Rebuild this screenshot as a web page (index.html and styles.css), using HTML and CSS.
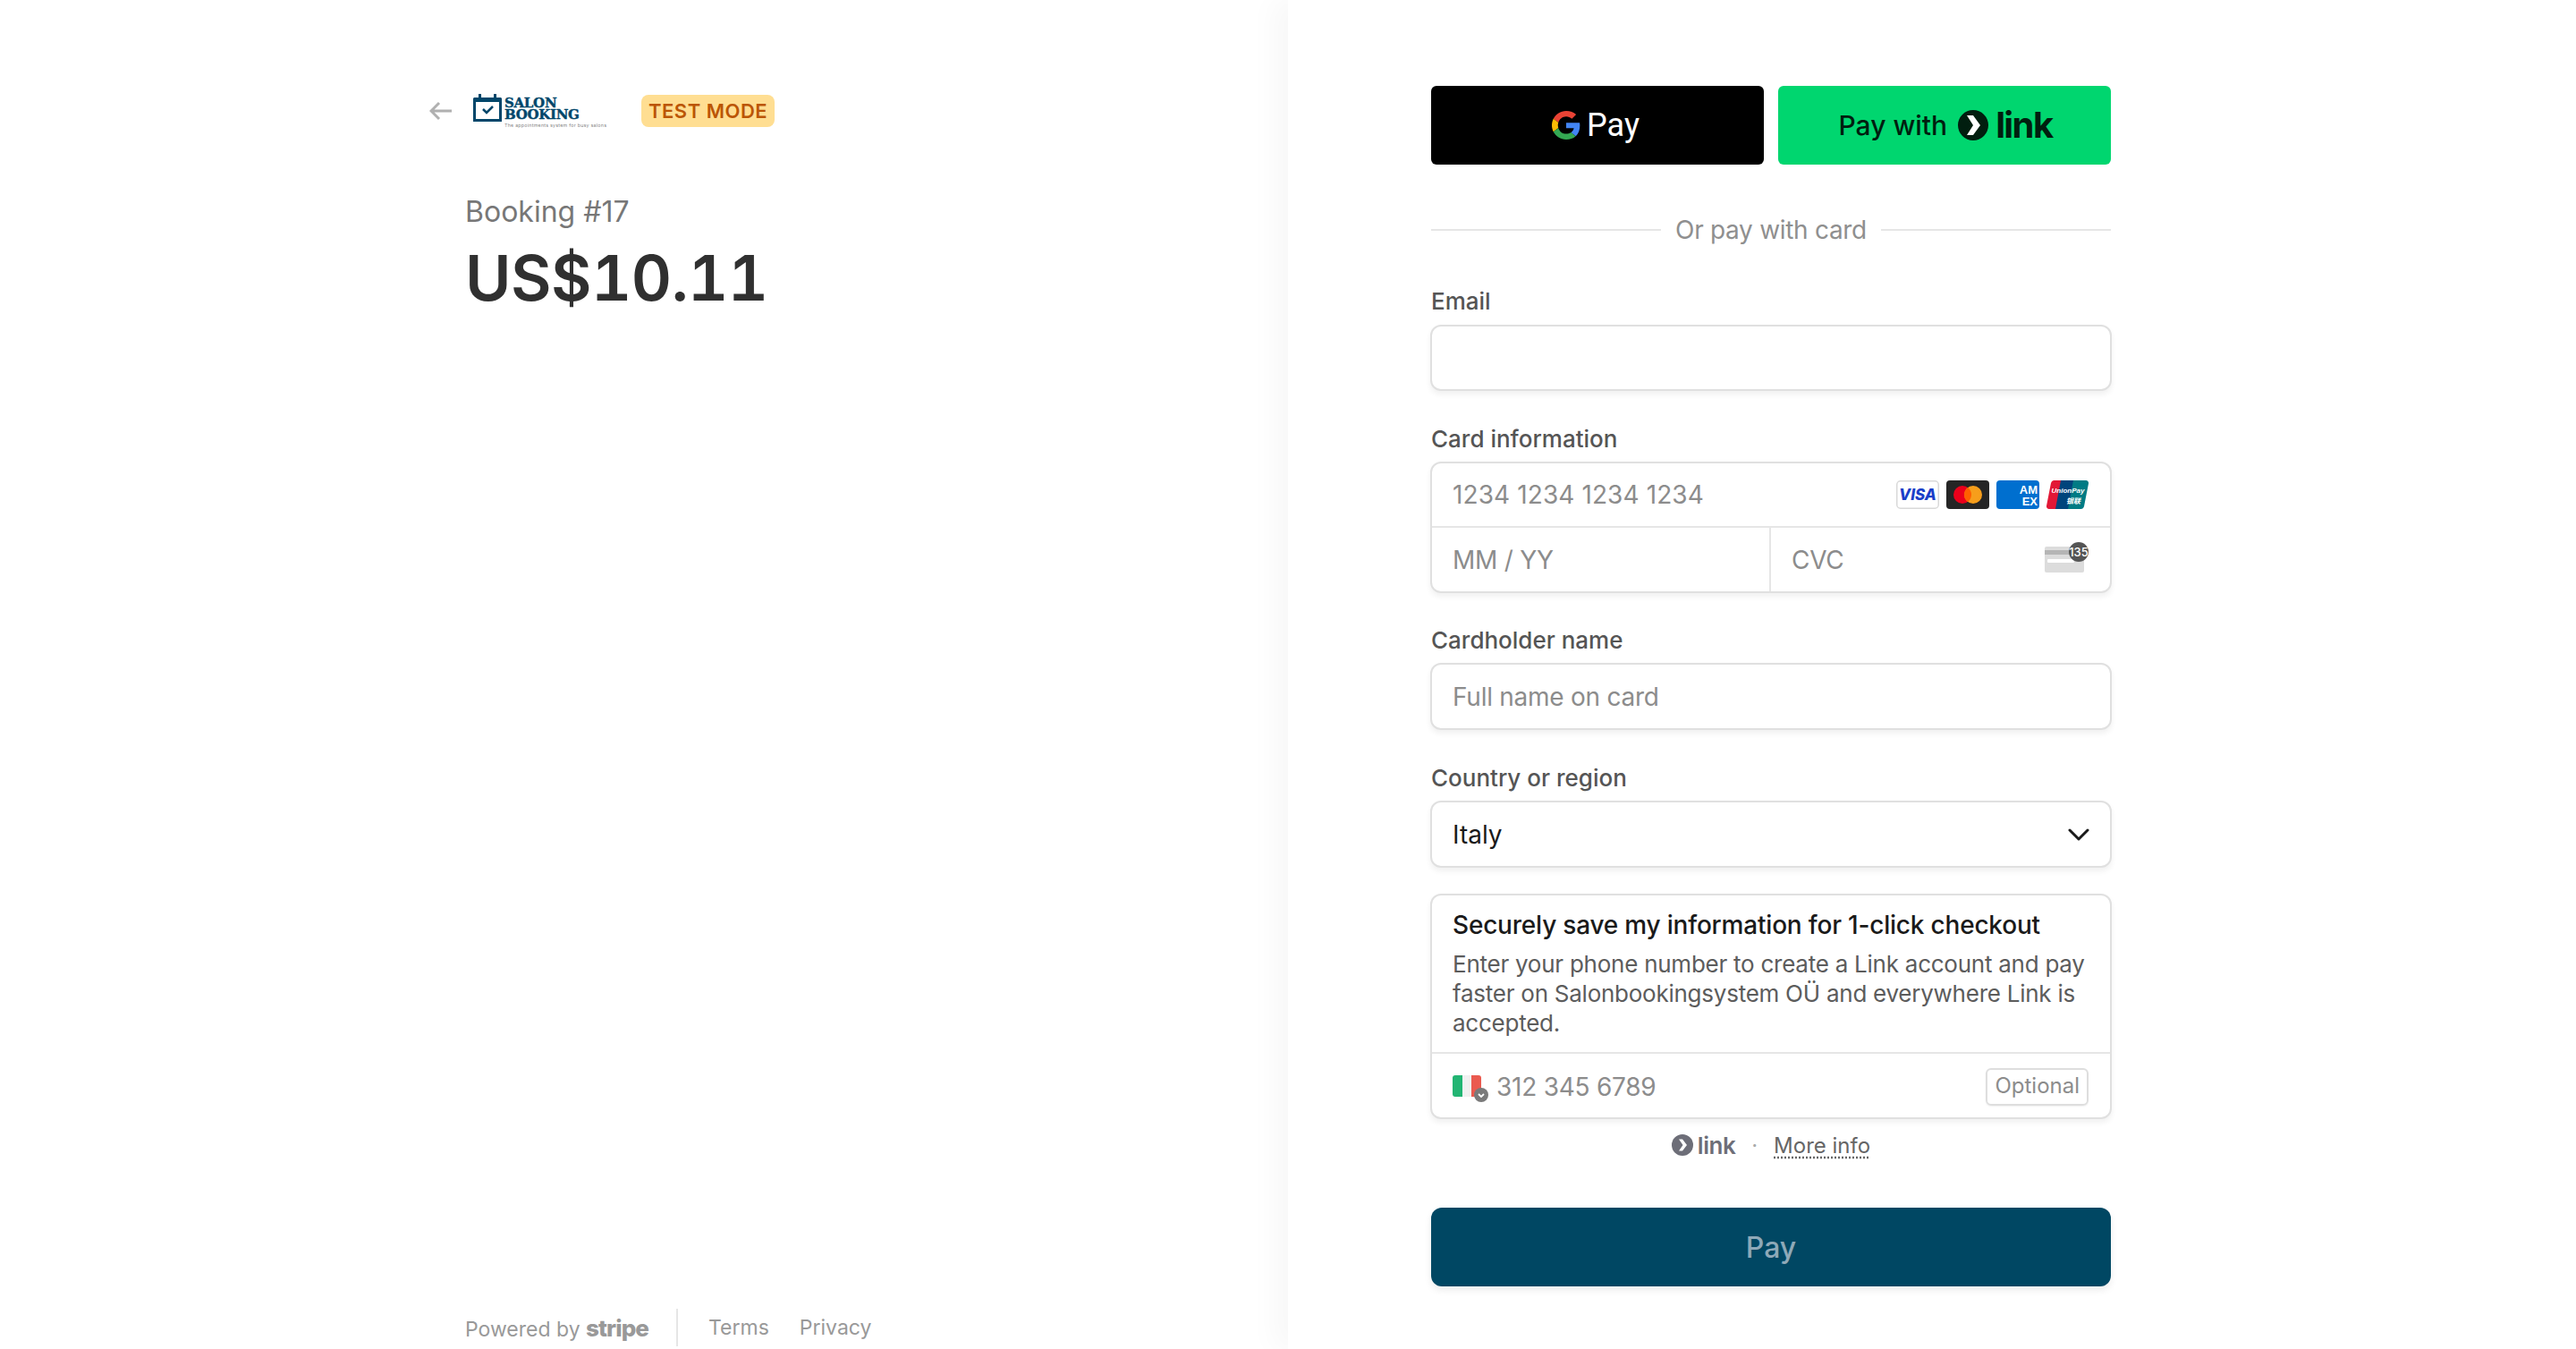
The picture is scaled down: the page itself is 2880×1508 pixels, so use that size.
FILE: index.html
```html
<!DOCTYPE html>
<html lang="en">
<head>
<meta charset="utf-8">
<title>Booking #17</title>
<link rel="stylesheet" href="styles.css">
</head>
<body>
<main class="page">
  <section class="summary">
    <div class="summary-top">
      <header class="brand-row">
        <svg class="back" viewBox="0 0 26 22" width="26" height="22"><path d="M25 11H3M11 2 2 11l9 9" fill="none" stroke="#b0b0b0" stroke-width="3"/></svg>
        <div class="logo">
          <svg class="logo-icon" viewBox="0 0 32 31" width="32" height="31"><path d="M1.500 6H30.500V29.500H1.500Z" fill="none" stroke="#00466a" stroke-width="3"/><path d="M1 4h30v5H1z" fill="#00466a"/><path d="M6 0h3v5H6zM23 0h3v5h-3z" fill="#00466a"/><path d="M11 17l4 4 7-7" fill="none" stroke="#00466a" stroke-width="2.500"/></svg>
          <div class="logo-words">
            <span class="logo-name">SALON<br>BOOKING</span>
            <span class="logo-tag">The appointments system for busy salons</span>
          </div>
        </div>
        <span class="test-badge">TEST MODE</span>
      </header>
      <p class="product">Booking #17</p>
      <p class="amount">US$10.11</p>
    </div>
    <footer class="legal">
      <span class="powered">Powered by <b class="stripe">stripe</b></span>
      <span class="legal-sep"></span>
      <a class="legal-link">Terms</a>
      <a class="legal-link">Privacy</a>
    </footer>
  </section>

  <section class="checkout">
    <div class="wallets">
      <button class="wallet gpay">
        <svg viewBox="0 0 48 48" width="32" height="32"><path fill="#ea4335" d="M24 9.500c3.700 0 7 1.300 9.600 3.700l7.100-7.100C36.400 2.200 30.700 0 24 0 14.600 0 6.500 5.400 2.600 13.200l8.300 6.400C12.800 13.700 17.900 9.500 24 9.500z"/><path fill="#4285f4" d="M47 24.500c0-1.600-.2-3.100-.4-4.500H24v9h12.900c-.6 3-2.200 5.500-4.700 7.200l8 6.200C44.900 38.100 47 31.900 47 24.500z"/><path fill="#fbbc05" d="M10.900 28.600c-.5-1.400-.8-3-.8-4.600s.3-3.200.8-4.600l-8.300-6.400C.9 16.500 0 20.100 0 24s.9 7.500 2.600 11z"/><path fill="#34a853" d="M24 48c6.500 0 11.900-2.100 15.900-5.800l-8-6.200c-2.200 1.500-5 2.400-7.900 2.400-6.100 0-11.200-4.100-13.100-9.700l-8.300 6.300C6.500 42.600 14.600 48 24 48z"/></svg>
        <span class="gpay-text">Pay</span>
      </button>
      <button class="wallet linkpay">
        <span class="linkpay-text">Pay with</span>
        <svg viewBox="0 0 34 34" width="34" height="34"><circle cx="17" cy="17" r="17" fill="#011e0f"/><path d="M10 6h7l8 11-8 11h-7l7-11z" fill="#fff"/></svg>
        <span class="link-word">link</span>
      </button>
    </div>

    <div class="divider"><span>Or pay with card</span></div>

    <div class="field field-email">
      <span class="label">Email</span>
      <div class="box input"></div>
    </div>

    <div class="field">
      <span class="label">Card information</span>
      <div class="box card">
        <div class="card-row">
          <span class="ph ph-num">1234 1234 1234 1234</span>
          <div class="brands">
            <svg viewBox="0 0 48 32" width="48" height="32"><rect x=".75" y=".75" width="46.500" height="30.500" rx="4" fill="#fff" stroke="#d9d9d9" stroke-width="1.500"/><text x="24" y="22" class="visa-mark">VISA</text></svg>
            <svg viewBox="0 0 48 32" width="48" height="32"><rect width="48" height="32" rx="4" fill="#252525"/><circle cx="18" cy="16" r="10" fill="#eb001b"/><circle cx="30" cy="16" r="10" fill="#f79e1b"/><path d="M24 8a10 10 0 0 1 0 16 10 10 0 0 1 0-16z" fill="#ff5f00"/></svg>
            <svg viewBox="0 0 48 32" width="48" height="32"><rect width="48" height="32" rx="4" fill="#006fcf"/><text x="46" y="15" class="amex-mark">AM</text><text x="46" y="28" class="amex-mark">EX</text></svg>
            <svg viewBox="0 0 47 32" width="47" height="32"><path d="M8 0h14L16 32H3a3 3 0 0 1-3-3.500L5 3a4 4 0 0 1 3-3z" fill="#e21836"/><path d="M16 0h16l-6 32H10z" fill="#00447c"/><path d="M30 0h14a3 3 0 0 1 3 3.500L42 29a4 4 0 0 1-4 3H24z" fill="#007b84"/><text x="24" y="14" class="up-mark">UnionPay</text><text x="30" y="26" class="up-mark">银联</text></svg>
          </div>
        </div>
        <div class="card-row card-split">
          <div class="card-cell"><span class="ph">MM / YY</span></div>
          <div class="card-cell cvc"><span class="ph">CVC</span>
            <svg viewBox="0 0 56 36" width="56" height="36" class="cvc-icon"><rect x="2" y="6" width="44" height="29" rx="2" fill="#dcdcdc"/><rect x="2" y="10" width="44" height="5" fill="#b5b5b5"/><rect x="5" y="20" width="30" height="4" rx="1" fill="#fff"/><circle cx="40" cy="12" r="11" fill="#555"/><text x="40" y="16.500" class="cvc-num">135</text></svg>
          </div>
        </div>
      </div>
    </div>

    <div class="field">
      <span class="label">Cardholder name</span>
      <div class="box input"><span class="ph">Full name on card</span></div>
    </div>

    <div class="field">
      <span class="label">Country or region</span>
      <div class="box input select">
        <span class="value">Italy</span>
        <svg viewBox="0 0 24 14" width="24" height="14"><path d="M2 2l10 10L22 2" fill="none" stroke="#1a1a1a" stroke-width="3" stroke-linecap="round" stroke-linejoin="round"/></svg>
      </div>
    </div>

    <div class="box linkbox">
      <div class="linkbox-body">
        <p class="linkbox-title">Securely save my information for 1-click checkout</p>
        <p class="linkbox-text">Enter your phone number to create a Link account and pay faster on Salonbookingsystem OÜ and everywhere Link is accepted.</p>
      </div>
      <div class="phone-row">
        <span class="flag">
          <svg viewBox="0 0 42 34" width="42" height="34"><path d="M3 0h8v24H3a3 3 0 0 1-3-3V3a3 3 0 0 1 3-3z" fill="#22b573"/><rect x="11" width="10" height="24" fill="#f1f1f1"/><path d="M21 0h8a3 3 0 0 1 3 3v18a3 3 0 0 1-3 3h-8z" fill="#ea5a4f"/><circle cx="32" cy="22" r="8" fill="#7a7a7a"/><path d="M29 21l3 3 3-3" fill="none" stroke="#fff" stroke-width="1.800"/></svg>
        </span>
        <span class="ph phone">312 345 6789</span>
        <span class="optional">Optional</span>
      </div>
    </div>

    <div class="link-foot">
      <svg viewBox="0 0 24 24" width="24" height="24"><circle cx="12" cy="12" r="12" fill="#6d6e78"/><path d="M8 5.500h4l5 6.500-5 6.500H8l4.500-6.500z" fill="#fff"/></svg>
      <span class="link-foot-word">link</span>
      <span class="link-dot">·</span>
      <a class="more">More info</a>
    </div>

    <button class="pay">Pay</button>
  </section>
</main>
</body>
</html>
```
FILE: styles.css
```css
* { box-sizing: border-box; }
html, body { margin: 0; height: 100%; background: #fff; }
body { font-family: Inter, "Noto Sans", "Liberation Sans", sans-serif; color: #1a1a1a; overflow: hidden; }
p { margin: 0; }
.page { display: flex; height: 1508px; width: 2880px; }

.summary { width: 1440px; padding: 104px 0 0 480px; display: flex; flex-direction: column; justify-content: space-between; }
.brand-row { display: flex; align-items: center; height: 40px; }
.back { margin-right: 23px; }
.logo { display: flex; align-items: flex-start; width: 188px; height: 40px; }
.logo-icon { margin-right: 3px; margin-top: 1px; }
.logo-words { display: flex; flex-direction: column; }
.logo-name { font: 800 15px/13px "DejaVu Serif", serif; color: #00466a; margin-top: 5px; letter-spacing: -.3px; -webkit-text-stroke: .4px #00466a; }
.logo-tag { font: 400 5.300px/7px Inter, sans-serif; color: #888; margin-top: 2px; white-space: nowrap; letter-spacing: .25px; }
.test-badge { background: #ffde92; color: #bb5504; font-size: 22px; font-weight: 600; line-height: 36px; padding: 0 8px; border-radius: 8px; letter-spacing: .5px; }
.product { margin: 69px 0 0 40px; font-size: 32px; line-height: 48px; font-weight: 400; color: #777; }
.amount { margin: 10px 0 0 40px; font-size: 70px; line-height: 80px; font-weight: 600; color: #303030; font-variant-numeric: tabular-nums; letter-spacing: -.5px; }
.legal { margin-left: 40px; height: 48px; display: flex; align-items: center; font-size: 23px; color: #999; margin-bottom: 0; }
.stripe { font-weight: 800; letter-spacing: -.9px; font-size: 26px; }
.legal-sep { width: 2px; height: 42px; background: #e6e6e6; margin: 0 34px 0 31px; }
.legal-link { margin-right: 34px; }

.checkout { width: 1440px; padding: 96px 0 0 160px; box-shadow: -16px 0 30px rgba(0, 0, 0, .03); background: #fff; }
.wallets { width: 760px; display: flex; gap: 16px; }
.wallet { flex: 0 0 372px; height: 88px; border: 0; border-radius: 6px; display: flex; align-items: center; justify-content: center; font-family: inherit; }
.gpay { background: #000; gap: 7px; padding-left: 2px; }
.gpay-text { color: #fff; font: 400 36px/40px Roboto, sans-serif; }
.linkpay { background: #00d66f; color: #011e0f; padding-left: 8px; }
.linkpay-text { font-size: 30px; font-weight: 500; margin-right: 12px; }
.link-word { font-size: 40px; font-weight: 700; margin-left: 8px; letter-spacing: -1.600px; line-height: 48px; }
.divider { width: 760px; margin-top: 53px; display: flex; align-items: center; gap: 16px; color: #8f8f8f; font-size: 28px; letter-spacing: -.3px; line-height: 40px; height: 40px; }
.divider::before, .divider::after { content: ""; flex: 1; height: 2px; background: #e6e6e6; }

.field { width: 760px; margin-top: 36px; }
.field-email { margin-top: 42px; }
.label { display: block; font-size: 26px; font-weight: 500; line-height: 36px; color: #555; margin-bottom: 7px; }
.field-email .label { margin-bottom: 8px; }
.box { background: #fff; border: 2px solid #e0e0e0; border-radius: 12px; box-shadow: 0 4px 6px rgba(0, 0, 0, .06); width: 762px; margin-left: -1px; }
.input { height: 75px; display: flex; align-items: center; padding: 0 23px; }
.field-email .input { height: 74px; }
.ph { color: #8c8c8c; font-size: 28px; letter-spacing: -.25px; }
.ph-num { letter-spacing: .1px; }
.value { font-size: 28px; color: #1a1a1a; }
.select { justify-content: space-between; padding-right: 23px; }
.card { height: 147px; margin-bottom: -1px; }
.card-row { height: 70px; display: flex; align-items: center; justify-content: space-between; padding: 0 24px 0 23px; }
.brands { display: flex; gap: 8px; }
.card-split { border-top: 2px solid #e6e6e6; padding: 0; height: 73px; align-items: stretch; }
.card-cell { flex: 1; display: flex; align-items: center; justify-content: space-between; padding: 0 23px; }
.card-cell:first-child { flex: 0 0 377px; }
.cvc { border-left: 2px solid #e6e6e6; padding-right: 19px; padding-left: 23px; }
.cvc-icon { margin-top: -6px; }
.visa-mark { font: italic 800 17px Inter, sans-serif; fill: #1a3ec8; text-anchor: middle; }
.amex-mark { font: 700 13px "Liberation Sans", sans-serif; fill: #fff; text-anchor: end; }
.up-mark { font: italic 700 8px "Liberation Sans", "Noto Sans CJK SC", sans-serif; fill: #fff; text-anchor: middle; }
.cvc-num { font: 500 13px Inter, sans-serif; fill: #fff; text-anchor: middle; }

.linkbox { margin-top: 29px; height: 252px; display: flex; flex-direction: column; }
.linkbox-body { height: 177px; padding: 16px 24px 0 23px; border-bottom: 2px solid #e6e6e6; }
.linkbox-title { font-size: 28px; font-weight: 500; line-height: 34px; color: #1a1a1a; letter-spacing: -.2px; }
.linkbox-text { font-size: 26px; line-height: 33px; color: #5c5c5c; margin-top: 10px; letter-spacing: -.25px; }
.phone-row { flex: 1; display: flex; align-items: center; padding: 2px 24px 0 23px; }
.flag { display: flex; width: 49px; height: 34px; margin-top: 8px; }
.phone { flex: 1; }
.optional { border: 2px solid #dedede; border-radius: 6px; font-size: 24px; color: #8c8c8c; height: 42px; line-height: 36px; padding: 0 8px; box-shadow: 0 1px 2px rgba(0,0,0,.06); }

.link-foot { width: 760px; height: 40px; margin-top: 9px; display: flex; align-items: center; justify-content: center; color: #6d6e78; }
.link-foot-word { font-size: 26px; font-weight: 600; margin-left: 5px; letter-spacing: -.5px; }
.link-dot { margin: 0 18px; font-size: 24px; color: #aaa; }
.more { font-size: 24px; color: #666; text-decoration: underline dotted; text-underline-offset: 5px; }
.pay { display: block; width: 760px; height: 88px; margin-top: 50px; border: 0; border-radius: 12px; background: #004763; color: #8fa9b8; font: 500 32px Inter, sans-serif; box-shadow: 0 4px 8px rgba(0, 0, 0, .08); }
```
